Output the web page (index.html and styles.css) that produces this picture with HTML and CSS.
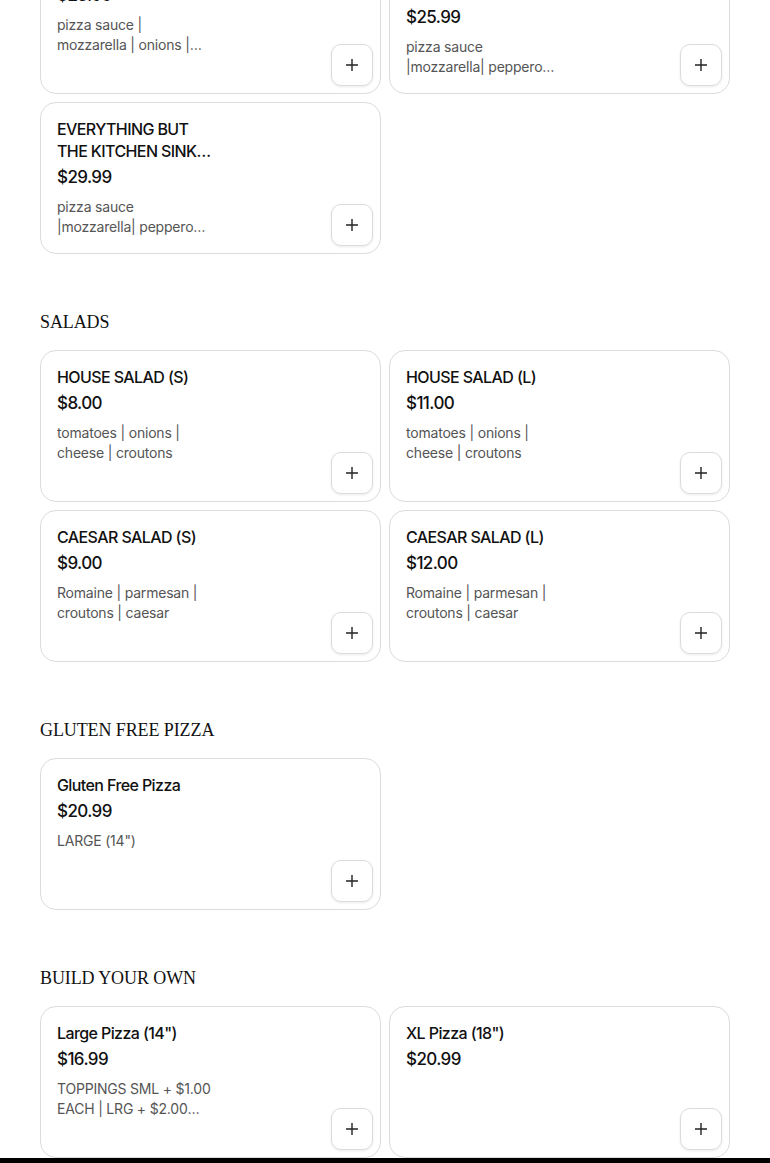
FILE: index.html
```html
<!DOCTYPE html>
<html>
<head>
<meta charset="utf-8">
<link rel="stylesheet" href="styles.css">
</head>
<body>
<main class="menu">
  <section class="section first">
    <div class="grid">
      <div class="card">
        <div class="info">
          <div class="title">SUPREME</div>
          <div class="price">$23.99</div>
          <div class="desc">pizza sauce | mozzarella | onions | peppers | mushrooms</div>
        </div>
        <button class="add"><svg viewBox="0 0 16 16" width="16" height="16"><path d="M8 2v12M2 8h12" stroke="#222" stroke-width="1.4" fill="none"/></svg></button>
      </div>
      <div class="card">
        <div class="info">
          <div class="title">MEAT LOVERS PEPPERONI SAUSAGE BACON</div>
          <div class="price">$25.99</div>
          <div class="desc">pizza sauce |mozzarella| pepperoni | sausage</div>
        </div>
        <button class="add"><svg viewBox="0 0 16 16" width="16" height="16"><path d="M8 2v12M2 8h12" stroke="#222" stroke-width="1.4" fill="none"/></svg></button>
      </div>
      <div class="card">
        <div class="info">
          <div class="title">EVERYTHING BUT THE KITCHEN SINK PIZZA</div>
          <div class="price">$29.99</div>
          <div class="desc">pizza sauce |mozzarella| pepperoni | sausage</div>
        </div>
        <button class="add"><svg viewBox="0 0 16 16" width="16" height="16"><path d="M8 2v12M2 8h12" stroke="#222" stroke-width="1.4" fill="none"/></svg></button>
      </div>
    </div>
  </section>

  <section class="section">
    <h2 class="heading">SALADS</h2>
    <div class="grid">
      <div class="card">
        <div class="info">
          <div class="title">HOUSE SALAD (S)</div>
          <div class="price">$8.00</div>
          <div class="desc">tomatoes | onions | cheese | croutons</div>
        </div>
        <button class="add"><svg viewBox="0 0 16 16" width="16" height="16"><path d="M8 2v12M2 8h12" stroke="#222" stroke-width="1.4" fill="none"/></svg></button>
      </div>
      <div class="card">
        <div class="info">
          <div class="title">HOUSE SALAD (L)</div>
          <div class="price">$11.00</div>
          <div class="desc">tomatoes | onions | cheese | croutons</div>
        </div>
        <button class="add"><svg viewBox="0 0 16 16" width="16" height="16"><path d="M8 2v12M2 8h12" stroke="#222" stroke-width="1.4" fill="none"/></svg></button>
      </div>
      <div class="card">
        <div class="info">
          <div class="title">CAESAR SALAD (S)</div>
          <div class="price">$9.00</div>
          <div class="desc">Romaine | parmesan | croutons | caesar</div>
        </div>
        <button class="add"><svg viewBox="0 0 16 16" width="16" height="16"><path d="M8 2v12M2 8h12" stroke="#222" stroke-width="1.4" fill="none"/></svg></button>
      </div>
      <div class="card">
        <div class="info">
          <div class="title">CAESAR SALAD (L)</div>
          <div class="price">$12.00</div>
          <div class="desc">Romaine | parmesan | croutons | caesar</div>
        </div>
        <button class="add"><svg viewBox="0 0 16 16" width="16" height="16"><path d="M8 2v12M2 8h12" stroke="#222" stroke-width="1.4" fill="none"/></svg></button>
      </div>
    </div>
  </section>

  <section class="section">
    <h2 class="heading">GLUTEN FREE PIZZA</h2>
    <div class="grid">
      <div class="card">
        <div class="info">
          <div class="title">Gluten Free Pizza</div>
          <div class="price">$20.99</div>
          <div class="desc">LARGE (14")</div>
        </div>
        <button class="add"><svg viewBox="0 0 16 16" width="16" height="16"><path d="M8 2v12M2 8h12" stroke="#222" stroke-width="1.4" fill="none"/></svg></button>
      </div>
    </div>
  </section>

  <section class="section">
    <h2 class="heading">BUILD YOUR OWN</h2>
    <div class="grid">
      <div class="card">
        <div class="info">
          <div class="title">Large Pizza (14")</div>
          <div class="price">$16.99</div>
          <div class="desc">TOPPINGS SML + $1.00 EACH | LRG + $2.00 EACH</div>
        </div>
        <button class="add"><svg viewBox="0 0 16 16" width="16" height="16"><path d="M8 2v12M2 8h12" stroke="#222" stroke-width="1.4" fill="none"/></svg></button>
      </div>
      <div class="card">
        <div class="info">
          <div class="title">XL Pizza (18")</div>
          <div class="price">$20.99</div>
        </div>
        <button class="add"><svg viewBox="0 0 16 16" width="16" height="16"><path d="M8 2v12M2 8h12" stroke="#222" stroke-width="1.4" fill="none"/></svg></button>
      </div>
    </div>
  </section>
</main>
<div class="bottom-bar"></div>
</body>
</html>
```
FILE: styles.css
```css
* { box-sizing: border-box; }
html, body { margin: 0; padding: 0; background: #fff; }
body {
  font-family: Inter, "Liberation Sans", sans-serif;
  color: #111;
  overflow: hidden;
}
.menu {
  padding: 0 40px;
  margin-top: -58px;
}
.section { margin-top: 56px; }
.section.first { margin-top: 0; }
.heading {
  font-family: "Liberation Serif", "DejaVu Serif", serif;
  font-weight: 400;
  font-size: 18px;
  line-height: 24px;
  margin: 0 0 16px;
  color: #111;
  letter-spacing: -0.1px;
}
.grid {
  display: grid;
  grid-template-columns: 1fr 1fr;
  gap: 8px;
}
.card {
  height: 152px;
  border: 1px solid #dcdcdc;
  border-radius: 16px;
  padding: 15px 7px 7px 16px;
  display: flex;
  justify-content: space-between;
  align-items: flex-end;
  background: #fff;
}
.info {
  align-self: flex-start;
  width: 160px;
}
.title {
  font-size: 16px;
  line-height: 22px;
  font-weight: 500;
  color: #111;
  display: -webkit-box;
  -webkit-line-clamp: 2;
  -webkit-box-orient: vertical;
  overflow: hidden;
  letter-spacing: -0.6px;
}
.price {
  margin-top: 2px;
  font-size: 17px;
  line-height: 26px;
  font-weight: 500;
  color: #111;
  letter-spacing: -0.6px;
}
.desc {
  margin-top: 7px;
  max-width: 155px;
  font-size: 14px;
  line-height: 20px;
  color: #555;
  display: -webkit-box;
  -webkit-line-clamp: 2;
  -webkit-box-orient: vertical;
  overflow: hidden;
  letter-spacing: -0.2px;
}
.add {
  width: 42px;
  height: 42px;
  flex: none;
  border: 1px solid #dcdcdc;
  border-radius: 10px;
  background: #fff;
  box-shadow: 0 1px 3px rgba(0,0,0,0.08);
  display: flex;
  align-items: center;
  justify-content: center;
  padding: 0;
  cursor: pointer;
}
.bottom-bar {
  position: fixed;
  left: 0;
  right: 0;
  bottom: 0;
  height: 5px;
  background: #000;
}
```
